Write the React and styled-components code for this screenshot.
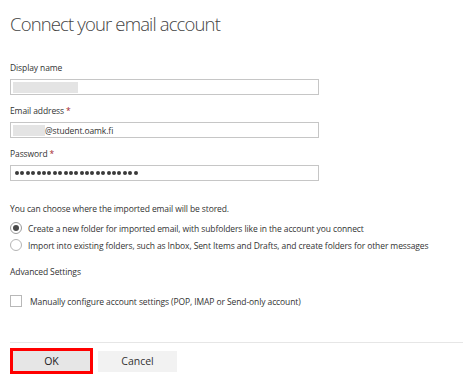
import React from "react";
import styled, { createGlobalStyle } from "styled-components";

const GlobalStyle = createGlobalStyle`
  html, body {
    margin: 0;
    padding: 0;
    background: #ffffff;
  }
  body {
    font-family: "Open Sans", "Liberation Sans", Arial, sans-serif;
    color: #333333;
  }
`;

const Page = styled.div`
  width: 463px;
  height: 388px;
  box-sizing: border-box;
  padding-left: 10px;
  display: flex;
  flex-direction: column;
  overflow: hidden;
`;

const Title = styled.h1`
  margin: 12px 0 0;
  font-size: 18.5px;
  line-height: 24px;
  font-weight: 300;
  color: #444444;
  letter-spacing: -0.85px;
`;

const Fields = styled.div`
  margin-top: 26px;
  display: flex;
  flex-direction: column;
  gap: 10px;
`;

const Field = styled.div`
  display: flex;
  flex-direction: column;
  gap: 5px;
`;

const smallText = `
  font-size: 8.5px;
  letter-spacing: -0.1px;
  color: #333333;
  white-space: nowrap;
`;

const Label = styled.div`
  ${smallText}
  line-height: 12px;
`;

const Star = styled.span`
  color: #a4262c;
  margin-left: 2px;
`;

const InputBox = styled.div`
  ${smallText}
  width: 309px;
  height: 16px;
  box-sizing: border-box;
  border: 1px solid #c6c6c6;
  display: flex;
  align-items: center;
  padding-left: 2px;
`;

const Redacted = styled.span`
  display: inline-block;
  width: ${(p) => p.$w}px;
  height: ${(p) => p.$h}px;
  background: #e4e4e4;
`;

const Dots = styled.span`
  display: inline-flex;
  gap: 1.4px;
  padding-left: 2px;
`;

const Dot = styled.span`
  width: 4px;
  height: 4px;
  border-radius: 50%;
  background: #3a3a3a;
`;

const Info = styled.div`
  ${smallText}
  margin-top: 22px;
  line-height: 12px;
`;

const Options = styled.div`
  margin-top: 5px;
  display: flex;
  flex-direction: column;
  gap: 1px;
`;

const OptionRow = styled.label`
  ${smallText}
  display: flex;
  align-items: center;
  height: 16px;
  gap: ${(p) => p.$gap}px;
`;

const Radio = styled.span`
  width: 12px;
  height: 12px;
  box-sizing: border-box;
  border-radius: 50%;
  border: 1px solid ${(p) => (p.$checked ? "#9a9a9a" : "#b4b4b4")};
  display: flex;
  align-items: center;
  justify-content: center;
  flex-shrink: 0;
  &::after {
    content: "";
    display: ${(p) => (p.$checked ? "block" : "none")};
    width: 6px;
    height: 6px;
    border-radius: 50%;
    background: #4a4a4a;
  }
`;

const Section = styled.div`
  ${smallText}
  margin-top: 13px;
  line-height: 12px;
`;

const CheckRow = styled(OptionRow)`
  margin-top: 15px;
`;

const Checkbox = styled.span`
  width: 12px;
  height: 12px;
  box-sizing: border-box;
  border: 1px solid #b8b8b8;
  flex-shrink: 0;
`;

const Separator = styled.hr`
  margin: 33px 0 0;
  border: none;
  height: 1px;
  background: #e6e6e6;
`;

const Buttons = styled.div`
  margin-top: 5px;
  display: flex;
  align-items: center;
  gap: 5px;
`;

const Button = styled.button`
  box-sizing: border-box;
  width: ${(p) => (p.$primary ? 83 : 79)}px;
  height: ${(p) => (p.$primary ? 26 : 21)}px;
  border: ${(p) => (p.$primary ? "3px solid #ff0000" : "none")};
  background: ${(p) => (p.$primary ? "#e6e6e6" : "#f2f2f2")};
  font-family: "Open Sans", "Liberation Sans", Arial, sans-serif;
  font-size: 10.5px;
  color: ${(p) => (p.$primary ? "#1a1a1a" : "#333333")};
  padding: 0;
  cursor: pointer;
`;

export default function App() {
  return (
    <>
      <GlobalStyle />
      <Page>
        <Title>Connect your email account</Title>
        <Fields>
          <Field>
            <Label>Display name</Label>
            <InputBox>
              <Redacted $w={65} $h={11} />
            </InputBox>
          </Field>
          <Field>
            <Label>
              Email address<Star>*</Star>
            </Label>
            <InputBox>
              <Redacted $w={32} $h={11} />
              @student.oamk.fi
            </InputBox>
          </Field>
          <Field>
            <Label>
              Password<Star>*</Star>
            </Label>
            <InputBox aria-label="password">
              <Dots>
                {Array.from({ length: 23 }, (_, i) => (
                  <Dot key={i} />
                ))}
              </Dots>
            </InputBox>
          </Field>
        </Fields>
        <Info>You can choose where the imported email will be stored.</Info>
        <Options>
          <OptionRow $gap={6}>
            <Radio $checked />
            Create a new folder for imported email, with subfolders like in the account you connect
          </OptionRow>
          <OptionRow $gap={6}>
            <Radio />
            Import into existing folders, such as Inbox, Sent Items and Drafts, and create folders for other messages
          </OptionRow>
        </Options>
        <Section>Advanced Settings</Section>
        <CheckRow $gap={8}>
          <Checkbox />
          Manually configure account settings (POP, IMAP or Send-only account)
        </CheckRow>
        <Separator />
        <Buttons>
          <Button $primary>OK</Button>
          <Button>Cancel</Button>
        </Buttons>
      </Page>
    </>
  );
}
